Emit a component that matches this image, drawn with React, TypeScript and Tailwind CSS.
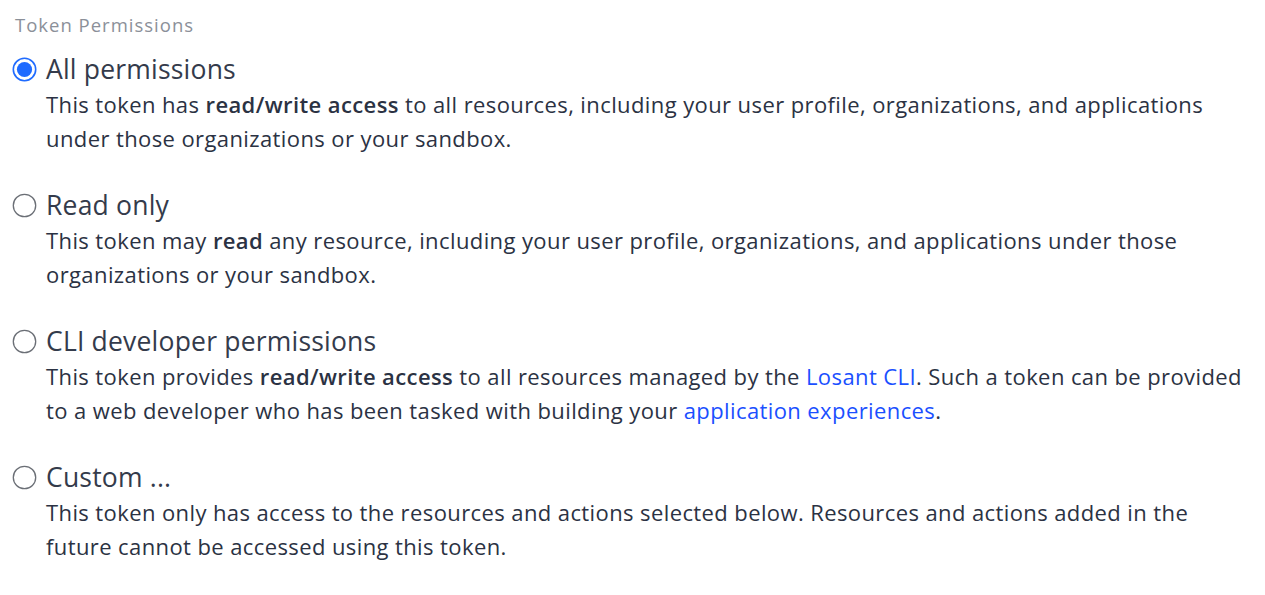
import React from "react";

function Radio({ checked }: { checked?: boolean }) {
  return checked ? (
    <svg width="25" height="25" viewBox="0 0 25 25" className="shrink-0">
      <circle cx="12.5" cy="12.5" r="11.2" fill="white" stroke="#1f6bff" strokeWidth="1.6" />
      <circle cx="12.5" cy="12.5" r="7.6" fill="#1f6bff" />
    </svg>
  ) : (
    <svg width="25" height="25" viewBox="0 0 25 25" className="shrink-0">
      <circle cx="12.5" cy="12.5" r="11.2" fill="white" stroke="#6b6f76" strokeWidth="1.3" />
    </svg>
  );
}

function Option({ title, checked, children }: { title: string; checked?: boolean; children: React.ReactNode }) {
  return (
    <div className="flex flex-col">
      <div className="flex items-center gap-[9px] h-[36px]">
        <Radio checked={checked} />
        <span className="text-[26.5px] tracking-[0.2px] text-[#343b4b] leading-[36px]">{title}</span>
      </div>
      <p className="pl-[34px] pr-[20px] text-[22px] tracking-[0.4px] leading-[34px] text-[#2b3243]">{children}</p>
    </div>
  );
}

export default function App() {
  return (
    <div className="bg-white w-[1265px] h-[595px] pl-[12px] pt-[12px]" style={{ fontFamily: '"Open Sans", sans-serif' }}>
      <div className="pl-[3px] text-[18.5px] tracking-[1px] leading-[26px] text-[#8b9099]">Token Permissions</div>
      <div className="flex flex-col gap-[32px] mt-[13px]">
        <Option title="All permissions" checked>
          This token has <b className="font-semibold">read/write access</b> to all resources, including your user profile, organizations, and applications under those organizations or your sandbox.
        </Option>
        <Option title="Read only">
          This token may <b className="font-semibold">read</b> any resource, including your user profile, organizations, and applications under those organizations or your sandbox.
        </Option>
        <Option title="CLI developer permissions">
          This token provides <b className="font-semibold">read/write access</b> to all resources managed by the <a className="text-[#1a4fff]">Losant CLI</a>. Such a token can be provided to a web developer who has been tasked with building your <a className="text-[#1a4fff]">application experiences</a>.
        </Option>
        <Option title="Custom ...">
          This token only has access to the resources and actions selected below. Resources and actions added in the future cannot be accessed using this token.
        </Option>
      </div>
    </div>
  );
}
